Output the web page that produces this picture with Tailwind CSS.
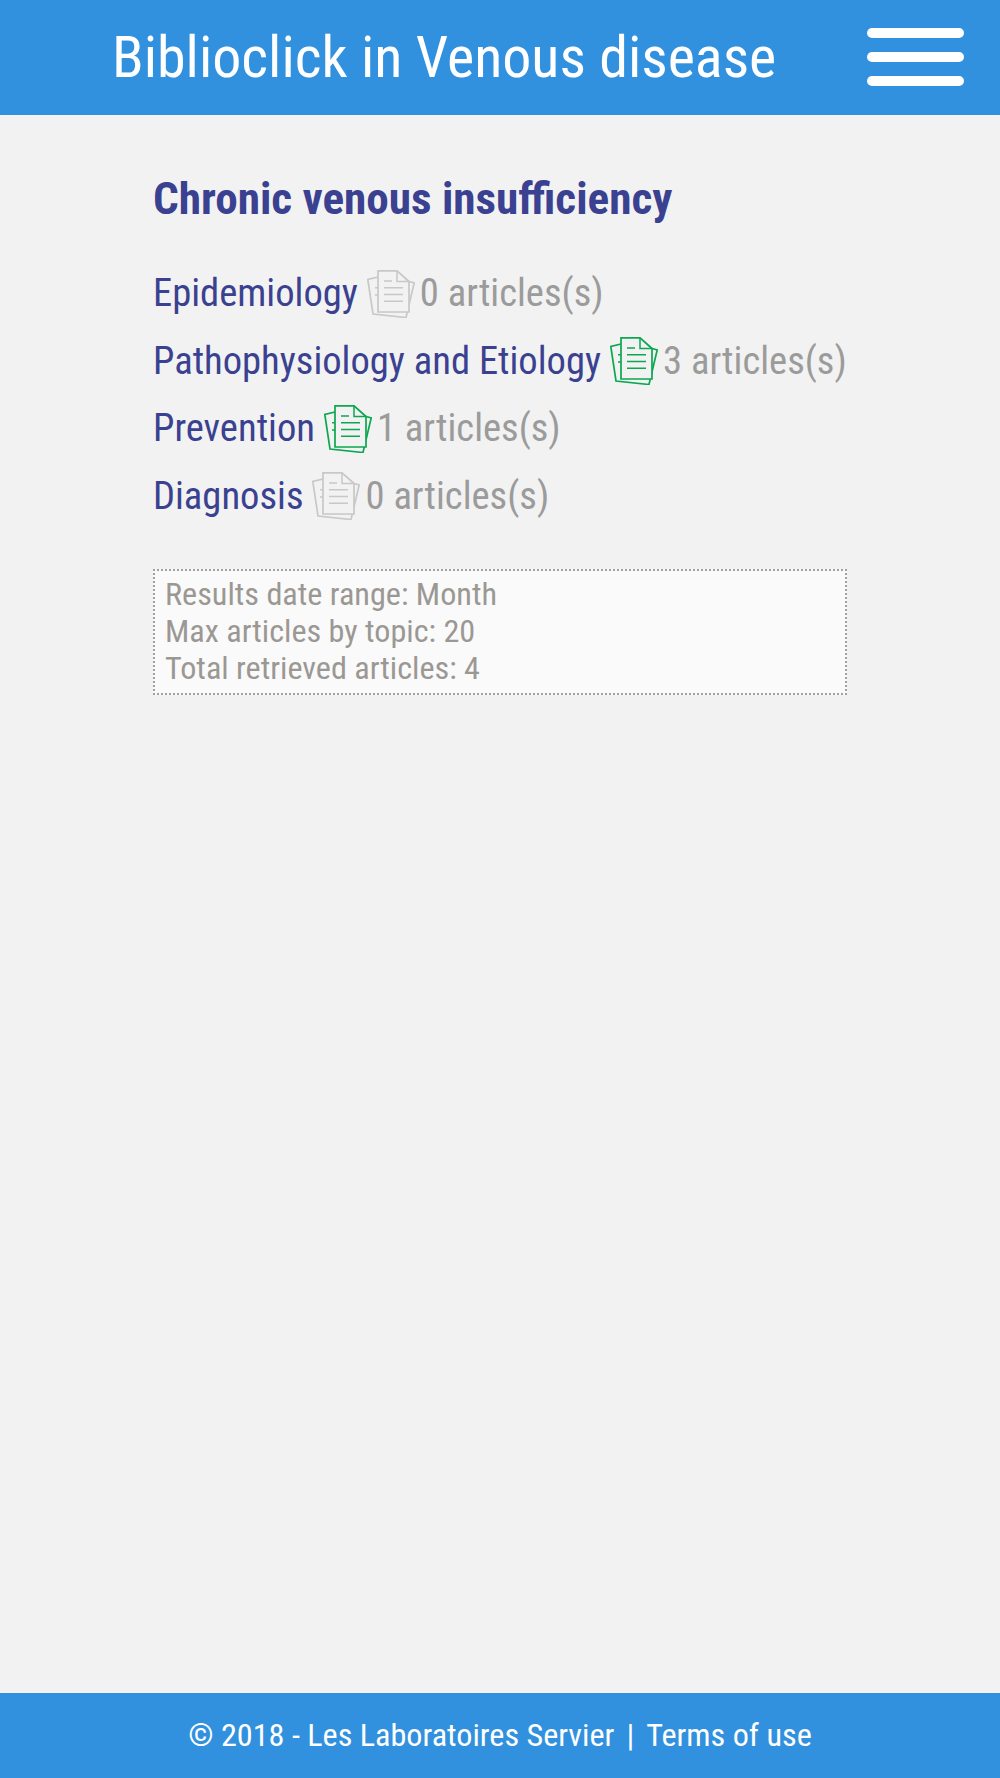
<!DOCTYPE html>
<html lang="en">
<head>
    <meta charset="UTF-8">
    <meta name="viewport" content="width=device-width, initial-scale=1.0">
    <title>Biblioclick in Venous disease</title>
    <script src="https://cdn.jsdelivr.net/npm/@tailwindcss/browser@4"></script>
</head>
<body class="h-[1778px] flex flex-col bg-[#f2f2f2] font-['Roboto',sans-serif] [font-stretch:75%]">
    <header class="h-[115px] bg-[#3191de] flex items-center justify-between pl-[112px] pr-[36px]">
        <h1 class="text-[58px] leading-none text-white mb-[2px]">Biblioclick in Venous disease</h1>
        <button class="w-[97px] flex flex-col gap-[14px] mb-[1px]">
            <span class="block h-[10px] rounded-full bg-white"></span>
            <span class="block h-[10px] rounded-full bg-white"></span>
            <span class="block h-[10px] rounded-full bg-white"></span>
        </button>
    </header>

    <main class="flex-1 px-[153px] pt-[58px]">
        <h2 class="text-[45.2px] leading-[52px] font-bold text-[#3a4190]">Chronic venous insufficiency</h2>

        <ul class="mt-[34px] text-[38.6px] leading-[67.5px] text-[#9b9b9b] whitespace-nowrap">
            <li class="flex items-center gap-[9px]">
                <a class="text-[#3a4190]">Epidemiology</a>
                <svg class="w-[48px] h-[48px] shrink-0 mt-[2px] text-[#c8c8c8]" viewBox="0 0 48 48"><use href="#docs"/></svg>
                <span class="-ml-[4px]">0 articles(s)</span>
            </li>
            <li class="flex items-center gap-[9px]">
                <a class="text-[#3a4190]">Pathophysiology and Etiology</a>
                <svg class="w-[48px] h-[48px] shrink-0 mt-[2px] text-[#0ca750]" viewBox="0 0 48 48"><use href="#docs"/></svg>
                <span class="-ml-[4px]">3 articles(s)</span>
            </li>
            <li class="flex items-center gap-[9px]">
                <a class="text-[#3a4190]">Prevention</a>
                <svg class="w-[48px] h-[48px] shrink-0 mt-[2px] text-[#0ca750]" viewBox="0 0 48 48"><use href="#docs"/></svg>
                <span class="-ml-[4px]">1 articles(s)</span>
            </li>
            <li class="flex items-center gap-[9px]">
                <a class="text-[#3a4190]">Diagnosis</a>
                <svg class="w-[48px] h-[48px] shrink-0 mt-[2px] text-[#c8c8c8]" viewBox="0 0 48 48"><use href="#docs"/></svg>
                <span class="-ml-[4px]">0 articles(s)</span>
            </li>
        </ul>

        <div class="mt-[40px] w-[694px] h-[126px] border-2 border-dotted border-[#a0a0a0] bg-[#fafafa] px-[10px] py-[5px] text-[32.2px] leading-[37px] text-[#9b9894]">
            <p>Results date range: Month</p>
            <p>Max articles by topic: 20</p>
            <p>Total retrieved articles: 4</p>
        </div>
    </main>

    <footer class="h-[85px] bg-[#3191de] flex items-center justify-center gap-[12px] text-[32.2px] text-white">
        <span>© 2018 - Les Laboratoires Servier</span><span>|</span><a>Terms of use</a>
    </footer>

    <svg class="hidden">
        <symbol id="docs" viewBox="0 0 48 48">
            <path d="M11 7 .8 9.5 6 44l33 3.5L47.2 13 42 11.5" stroke-width="1.7" fill="none" stroke="currentColor"/>
            <path d="M11 .8h19L42 11.5V42H11z" stroke-width="1.7" fill="#f2f2f2" stroke="currentColor"/>
            <path d="M30 .8v10.7h12M17 11h8M17 17.7h19M17 24.5h19M17 31.3h19M8 17.7h3M8 25h3" stroke-width="1.5" fill="none" stroke="currentColor"/>
        </symbol>
    </svg>
</body>
</html>
